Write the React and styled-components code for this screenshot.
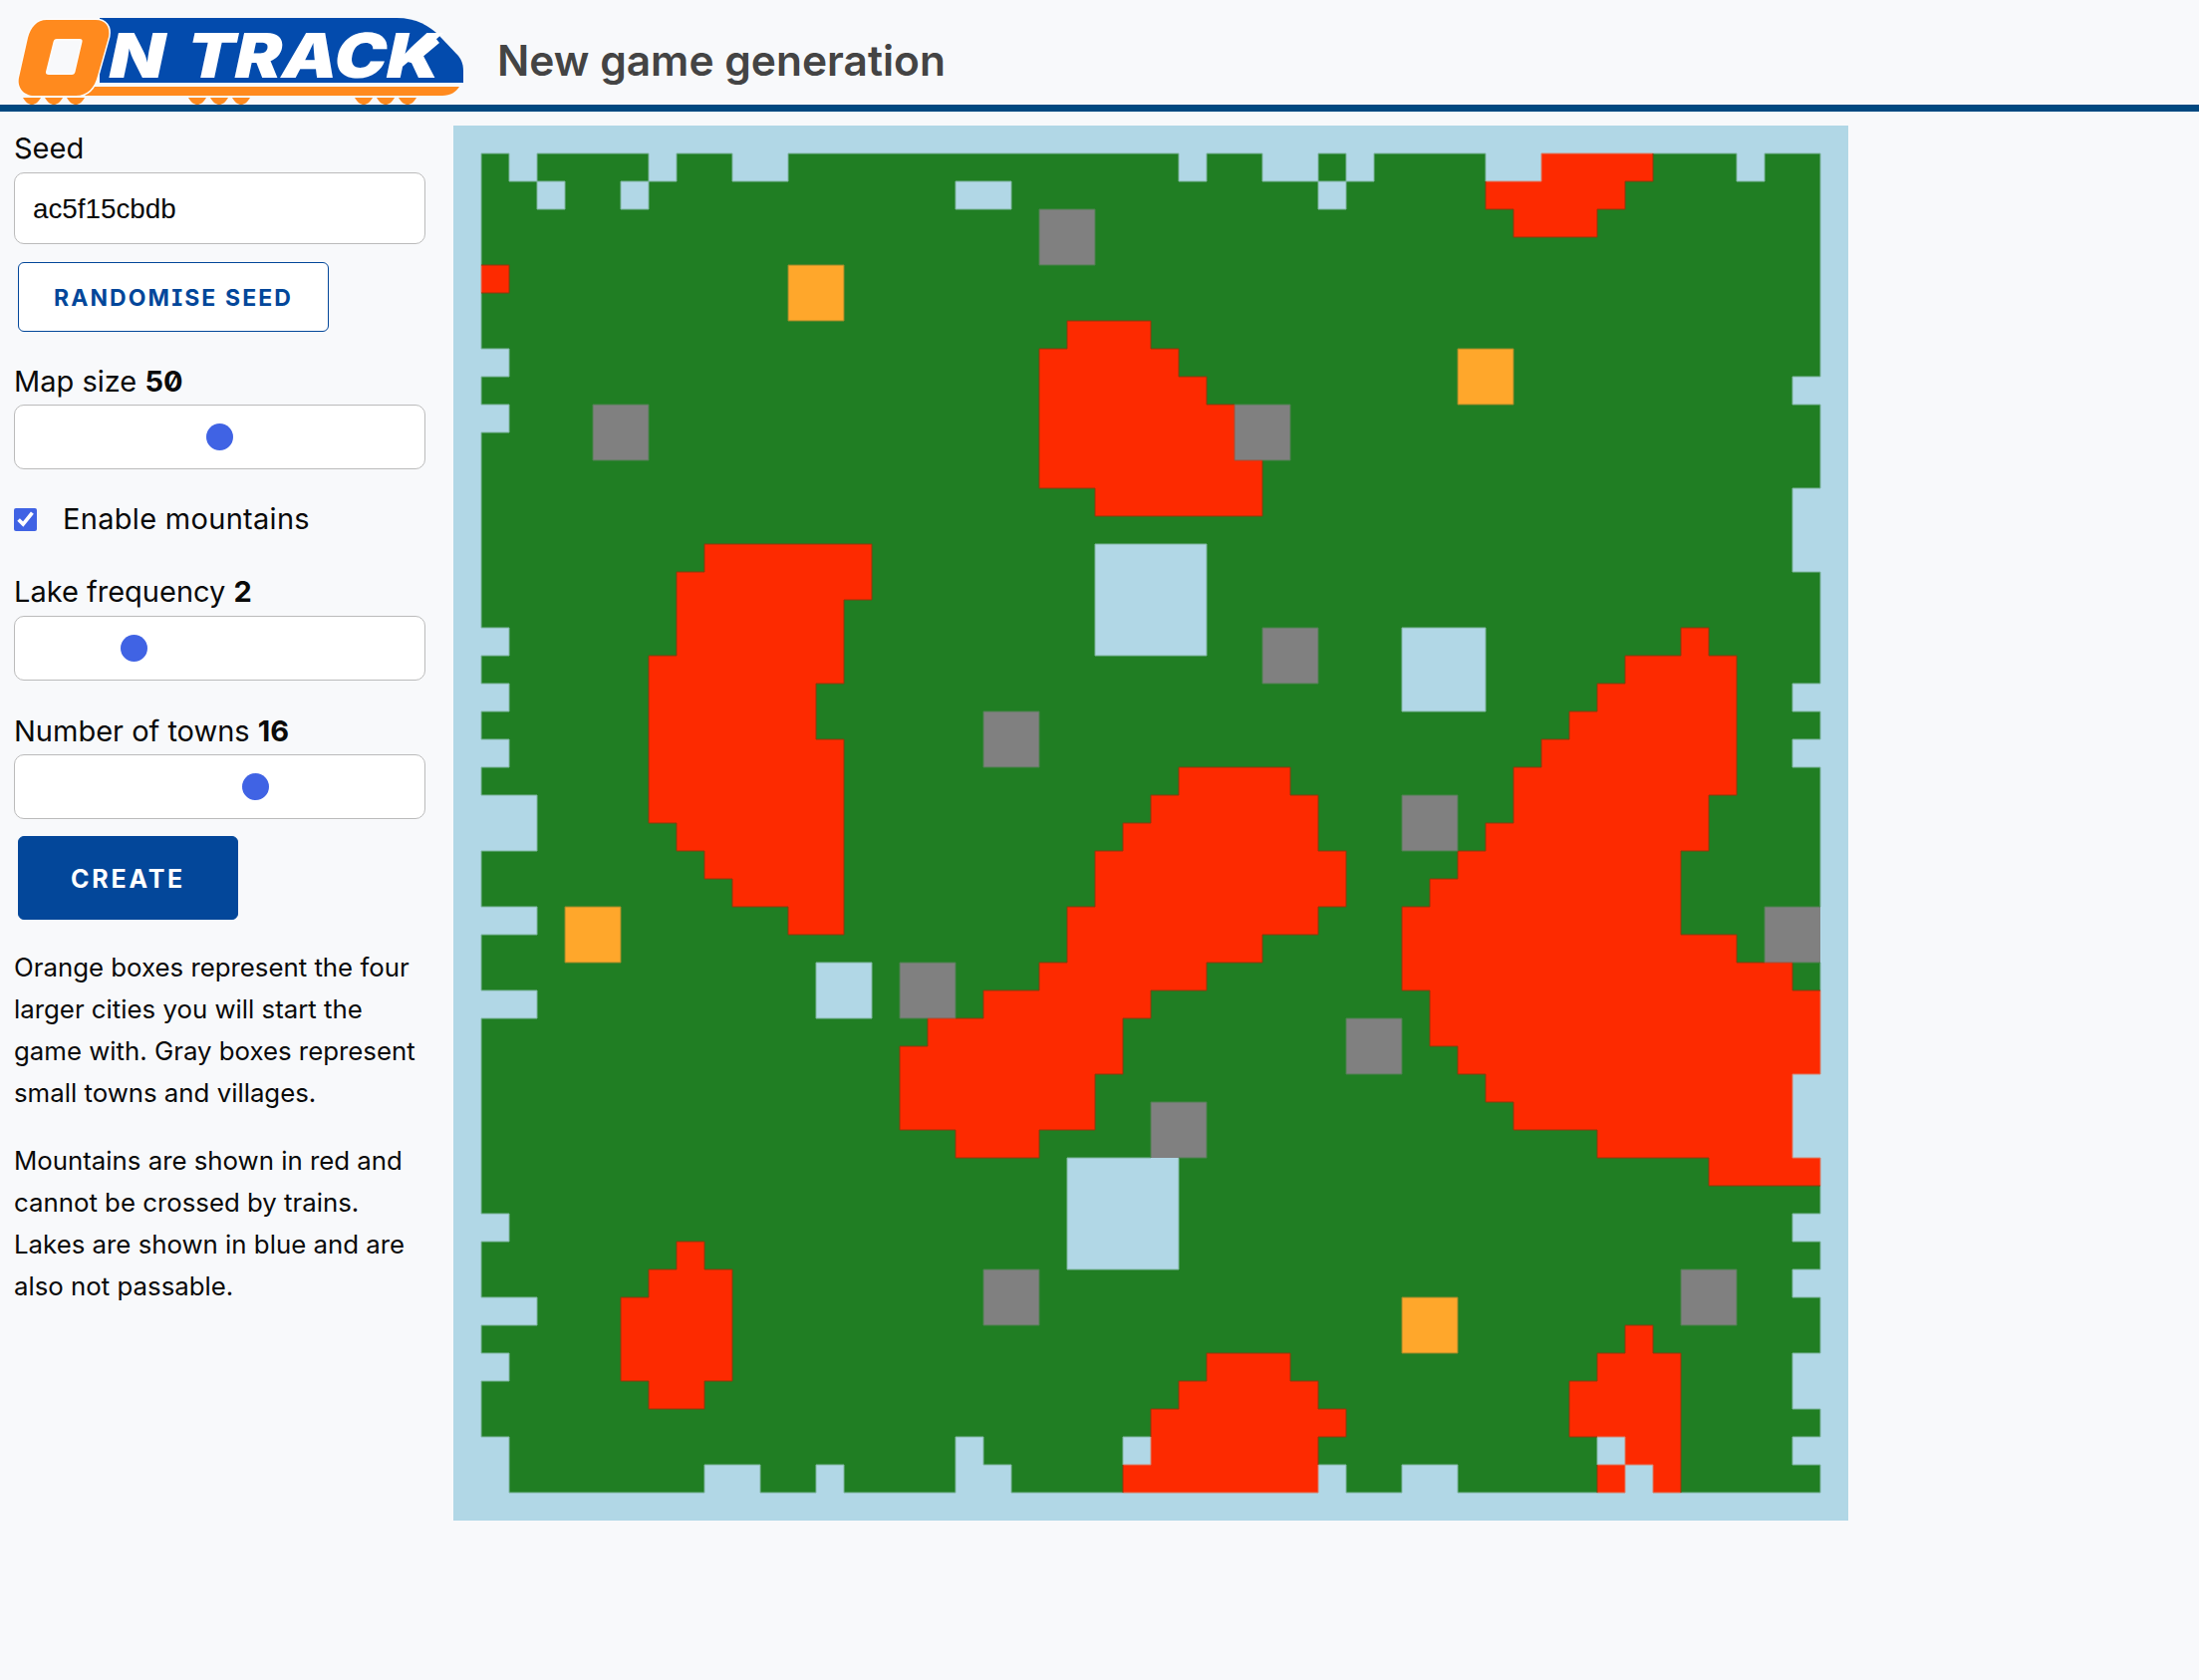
import React from 'react';
import styled, { createGlobalStyle } from 'styled-components';

const GlobalStyle = createGlobalStyle`
  * { box-sizing: border-box; }
  html, body { margin: 0; padding: 0; background: #f8f9fb; }
  body { font-family: Inter, "Noto Sans", sans-serif; font-size: 29px; line-height: 42px; color: #0a0a0a; }
`;

const BLUE = '#03479a';

const Header = styled.header`
  display: flex;
  align-items: flex-start;
  height: 112px;
  border-bottom: 7px solid #004880;
`;
const Title = styled.h1`
  margin: 34px 0 0 34px;
  font-size: 42.5px;
  line-height: 54px;
  font-weight: 600;
  color: #444;
`;
const Main = styled.main`
  display: flex;
  align-items: flex-start;
  padding-top: 14px;
`;
const Sidebar = styled.aside`
  flex: none;
  width: 455px;
  padding: 2px 28px 0 14px;
`;
const Label = styled.label`
  display: block;
  margin: ${(p) => p.$top || 0}px 0 ${(p) => p.$bottom ?? 2}px;
`;
const Value = styled.strong`
  font-weight: 700;
  font-feature-settings: "zero", "ss02";
`;
const TextInput = styled.input`
  display: block;
  width: 100%;
  height: 72px;
  padding: 2px 18px 0;
  border: 1.5px solid #bbb;
  border-radius: 10px;
  background: #fff;
  color: #0a0a0a;
  font: 27.8px "Liberation Sans", Arial, sans-serif;
`;
const Button = styled.button`
  display: block;
  margin: ${(p) => p.$top}px 0 0 4px;
  width: ${(p) => p.$width}px;
  height: ${(p) => p.$height}px;
  padding: 2px 0 0;
  border: 1.5px solid ${BLUE};
  border-radius: 6px;
  background: ${(p) => (p.$solid ? BLUE : '#fff')};
  color: ${(p) => (p.$solid ? '#fff' : BLUE)};
  font: 700 ${(p) => (p.$solid ? 25 : 23)}px Inter, sans-serif;
  letter-spacing: ${(p) => (p.$solid ? 2.8 : 2.1)}px;
  font-feature-settings: "cv08", "ss02";
  text-transform: uppercase;
`;
const Range = styled.input`
  display: block;
  width: 100%;
  height: 65px;
  margin: 0;
  padding: 0;
  appearance: none;
  border: 1.5px solid #bbb;
  border-radius: 10px;
  background: #fff;
  &::-webkit-slider-runnable-track { height: 27px; background: transparent; }
  &::-webkit-slider-thumb {
    appearance: none;
    width: 27px;
    height: 27px;
    border-radius: 50%;
    background: #4063e4;
  }
`;
const CheckRow = styled.label`
  display: flex;
  align-items: center;
  gap: 26px;
  margin: 29px 0 0;
  letter-spacing: 0.3px;
`;
const Check = styled.input`
  flex: none;
  width: 23px;
  height: 23px;
  margin: 0;
  accent-color: #4063e4;
`;
const Para = styled.p`
  margin: ${(p) => p.$top}px 0 0;
  font-size: 25.8px;
`;
const MapSvg = styled.svg`
  display: block;
  flex: none;
  width: 1400px;
  height: 1400px;
`;

const C = {
  land: '#207e23',
  water: '#b1d7e6',
  mountain: '#fd2a00',
  town: '#808080',
  city: '#ffa72b',
};

const WATER = {
  1: [[2, 2], [7, 7], [10, 11], [26, 26], [29, 30], [32, 32], [37, 38], [46, 46]],
  2: [[3, 3], [6, 6], [18, 19], [31, 31]],
  8: [[1, 1]], 9: [[48, 48]], 10: [[1, 1]],
  13: [[48, 48]], 14: [[48, 48]], 15: [[48, 48]],
  18: [[1, 1]], 20: [[1, 1], [48, 48]], 22: [[1, 1], [48, 48]],
  24: [[1, 2]], 25: [[1, 2]], 28: [[1, 2]], 31: [[1, 2]],
  34: [[48, 48]], 35: [[48, 48]], 36: [[48, 48]],
  39: [[1, 1], [48, 48]], 41: [[48, 48]], 42: [[1, 2]],
  44: [[1, 1], [48, 48]], 45: [[48, 48]],
  47: [[1, 1], [18, 18], [24, 24], [41, 41], [48, 48]],
  48: [[1, 1], [9, 10], [13, 13], [18, 19], [31, 31], [34, 35], [42, 42]],
};
const RED = {
  1: [[39, 42]], 2: [[37, 41]], 3: [[38, 40]], 5: [[1, 1]],
  7: [[22, 24]], 8: [[21, 25]], 9: [[21, 26]], 10: [[21, 27]], 11: [[21, 27]],
  12: [[21, 28]], 13: [[23, 28]],
  15: [[9, 14]], 16: [[8, 14]], 17: [[8, 13]], 18: [[8, 13], [44, 44]],
  19: [[7, 13], [42, 45]], 20: [[7, 12], [41, 45]], 21: [[7, 12], [40, 45]],
  22: [[7, 13], [39, 45]], 23: [[7, 13], [26, 29], [38, 45]],
  24: [[7, 13], [25, 30], [38, 44]], 25: [[8, 13], [24, 30], [37, 44]],
  26: [[9, 13], [23, 31], [36, 43]], 27: [[10, 13], [23, 31], [35, 43]],
  28: [[12, 13], [22, 30], [34, 43]], 29: [[22, 28], [34, 45]],
  30: [[21, 26], [34, 47]], 31: [[19, 24], [35, 48]], 32: [[17, 23], [35, 48]],
  33: [[16, 23], [36, 48]], 34: [[16, 22], [37, 47]], 35: [[16, 22], [38, 47]],
  36: [[18, 20], [41, 47]], 37: [[45, 48]],
  40: [[8, 8]], 41: [[7, 9]], 42: [[6, 9]], 43: [[6, 9], [42, 42]],
  44: [[6, 9], [27, 29], [41, 43]], 45: [[7, 8], [26, 30], [40, 43]],
  46: [[25, 31], [40, 43]], 47: [[25, 30], [42, 43]], 48: [[24, 30], [41, 41], [43, 43]],
};
const LAKES = [[23, 15, 4], [34, 18, 3], [13, 30, 2], [22, 37, 4]];
const TOWNS = [[21, 3], [5, 10], [28, 10], [29, 18], [19, 21], [34, 24], [47, 28], [16, 30], [32, 32], [25, 35], [19, 41], [44, 41]];
const CITIES = [[12, 5], [36, 8], [4, 28], [34, 42]];

function buildGrid() {
  const g = Array.from({ length: 50 }, (_, r) =>
    Array.from({ length: 50 }, (_, c) => (r === 0 || r === 49 || c === 0 || c === 49 ? 'water' : 'land')),
  );
  const fill = (spec, kind) =>
    Object.entries(spec).forEach(([r, spans]) =>
      spans.forEach(([a, b]) => {
        for (let c = a; c <= b; c++) g[r][c] = kind;
      }),
    );
  fill(WATER, 'water');
  fill(RED, 'mountain');
  LAKES.forEach(([x, y, s]) => {
    for (let r = y; r < y + s; r++) for (let c = x; c < x + s; c++) g[r][c] = 'water';
  });
  const block = (list, kind) =>
    list.forEach(([x, y]) => {
      for (let r = y; r < y + 2; r++) for (let c = x; c < x + 2; c++) g[r][c] = kind;
    });
  block(TOWNS, 'town');
  block(CITIES, 'city');
  return g;
}

const EDGE = {
  'land|mountain': '#8a3a0c',
  'land|water': '#7fb5a0',
  'land|town': '#4f8050',
  'city|land': '#98882a',
  'mountain|town': '#a0503a',
  'mountain|water': '#d8806a',
};

function GameMap() {
  const g = buildGrid();
  const S = 28;
  const rects = [];
  const edges = {};
  const addEdge = (a, b, d) => {
    const k = [a, b].sort().join('|');
    if (EDGE[k]) edges[k] = (edges[k] || '') + d;
  };
  g.forEach((row, r) => {
    let c = 0;
    while (c < 50) {
      let e = c;
      while (e + 1 < 50 && row[e + 1] === row[c]) e++;
      rects.push(<rect key={`${r}-${c}`} x={c * S} y={r * S} width={(e - c + 1) * S} height={S} fill={C[row[c]]} shapeRendering="crispEdges" />);
      c = e + 1;
    }
    row.forEach((k, col) => {
      if (col < 49 && row[col + 1] !== k) addEdge(k, row[col + 1], `M${(col + 1) * S} ${r * S}v${S}`);
      if (r < 49 && g[r + 1][col] !== k) addEdge(k, g[r + 1][col], `M${col * S} ${(r + 1) * S}h${S}`);
    });
  });
  return (
    <MapSvg viewBox="0 0 1400 1400">
      {rects}
      {Object.entries(edges).map(([k, d]) => (
        <path key={k} d={d} stroke={EDGE[k]} strokeWidth="1" fill="none" />
      ))}
    </MapSvg>
  );
}

const ORANGE = '#ff8a1e';
const LOGO_BLUE = '#034bad';

function Logo() {
  const wheels = [32, 54, 76, 198, 220, 242, 365, 387, 409];
  return (
    <svg width="465" height="105" viewBox="0 0 465 105" role="img" aria-label="On Track" style={{ flex: 'none' }}>
      <path d="M100 18H398C418 18 431 26 441 36L460 56C464 61 465 66 465 72V83H100Z" fill={LOGO_BLUE} />
      <path d="M90 87H461C458 92 452 96 444 96H85Z" fill={ORANGE} />
      {wheels.map((x) => (
        <path key={x} d={`M${x - 9} 98H${x + 9}C${x + 6} 103 ${x + 3} 105 ${x} 105C${x - 3} 105 ${x - 6} 103 ${x - 9} 98Z`} fill={ORANGE} />
      ))}
      <g fill="#fff" fontFamily="Inter, 'Liberation Sans', sans-serif" fontWeight="900" fontSize="62">
        <text x="106" y="78.5" transform="skewX(-12) translate(16.7 0)" textLength="56" lengthAdjust="spacingAndGlyphs">N</text>
        <text x="184" y="78.5" transform="skewX(-12) translate(16.7 0)" textLength="254" lengthAdjust="spacingAndGlyphs">TRACK</text>
      </g>
      <polygon points="402,60 433,33 441,43 416,64" fill="#fff" />
      <path
        fillRule="evenodd"
        d="M47 20H96C106 20 111 27 109 37L98 76C95 88 88 96 76 96H34C24 96 17 88 19 78L28 38C31 27 37 20 47 20ZM57 39C55 39 54 40 53.5 42L46 72C45.5 74 47 75 49 75H72C74 75 75 74 75.5 72L82.5 42C83 40 82 39 80 39Z"
        fill={ORANGE}
        stroke="#fdfdfd"
        strokeWidth="3"
        paintOrder="stroke"
      />
    </svg>
  );
}

export default function App() {
  return (
    <>
      <GlobalStyle />
      <Header>
        <Logo />
        <Title>New game generation</Title>
      </Header>
      <Main>
        <Sidebar>
          <Label $bottom={3}>Seed</Label>
          <TextInput type="text" defaultValue="ac5f15cbdb" />
          <Button $top={18} $width={312} $height={70}>Randomise seed</Button>
          <Label $top={29}>Map size <Value>50</Value></Label>
          <Range type="range" min="30" max="70" step="any" defaultValue="50" />
          <CheckRow><Check type="checkbox" defaultChecked />Enable mountains</CheckRow>
          <Label $top={31} $bottom={3}>Lake frequency <Value>2</Value></Label>
          <Range type="range" min="0" max="7.27" step="any" defaultValue="2" />
          <Label $top={30} $bottom={2}>Number of towns <Value>16</Value></Label>
          <Range type="range" min="0" max="27" step="any" defaultValue="16" />
          <Button $solid $top={17} $width={221} $height={84}>Create</Button>
          <Para $top={27}>Orange boxes represent the four larger cities you will start the game with. Gray boxes represent small towns and villages.</Para>
          <Para $top={26}>Mountains are shown in red and cannot be crossed by trains. Lakes are shown in blue and are also not passable.</Para>
        </Sidebar>
        <GameMap />
      </Main>
    </>
  );
}
